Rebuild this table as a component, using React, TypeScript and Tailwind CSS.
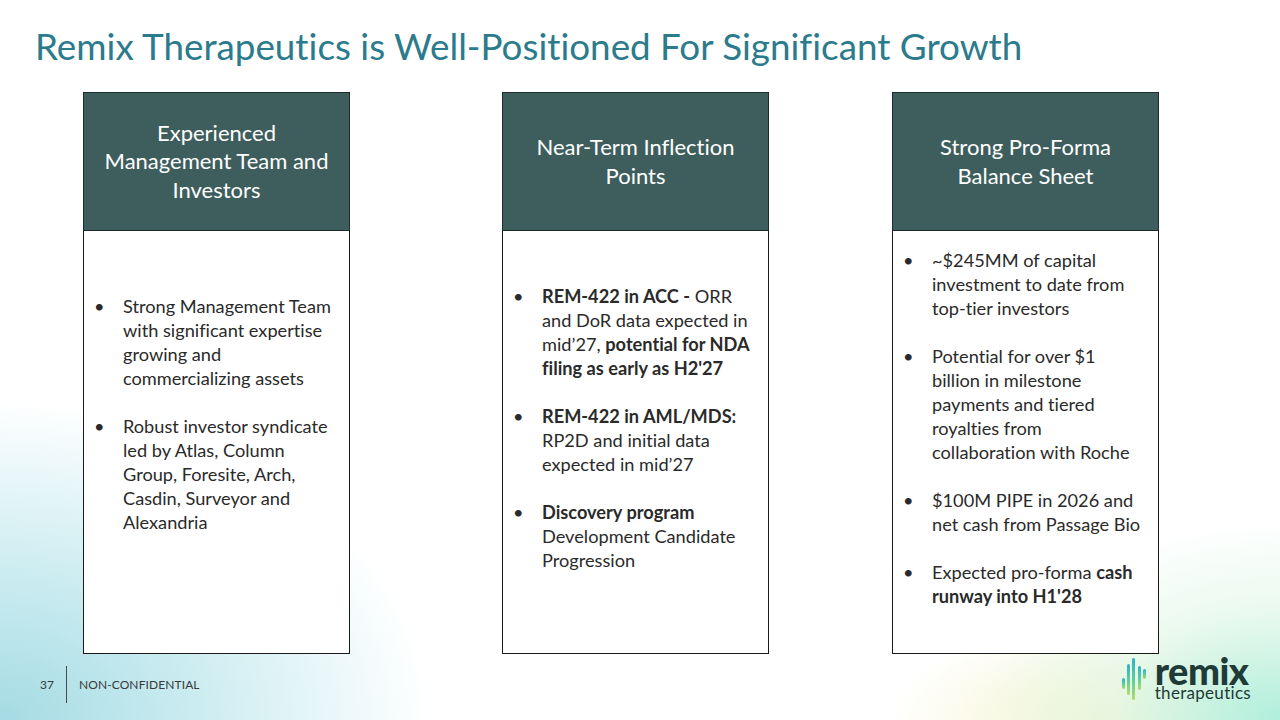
import React from "react";

const font = { fontFamily: "Lato, 'Liberation Sans', sans-serif" };

type Item = { lines: React.ReactNode[] };

function Bullet({ lines }: Item) {
  return (
    <div className="flex">
      <span className="w-[39px] shrink-0 pl-[10px]">•</span>
      <div>
        {lines.map((l, i) => (
          <div key={i} className="whitespace-nowrap">
            {l}
          </div>
        ))}
      </div>
    </div>
  );
}

function Card({
  title,
  items,
  padTop,
}: {
  title: React.ReactNode[];
  items: Item[];
  padTop: string;
}) {
  return (
    <div className="flex w-[267px] flex-col">
      <div className="flex h-[139px] flex-col items-center justify-center border border-[#1f2b2b] bg-[#3e5e5d] text-center text-[22px] leading-[28.5px] text-white">
        {title.map((t, i) => (
          <div key={i} className="whitespace-nowrap">
            {t}
          </div>
        ))}
      </div>
      <div
        className={`h-[423px] border border-t-0 border-[#1a1a1a] bg-white text-[18.2px] leading-[24px] text-[#2a2a2a] ${padTop}`}
      >
        <div className="flex flex-col gap-[24px]">
          {items.map((it, i) => (
            <Bullet key={i} lines={it.lines} />
          ))}
        </div>
      </div>
    </div>
  );
}

function Logo() {
  return (
    <div className="mt-[1px] flex items-start gap-[9px]">
      <svg width="26" height="46" viewBox="0 0 26 46" className="mt-[2px]">
        <defs>
          <linearGradient id="rx" x1="0" y1="0" x2="0" y2="1">
            <stop offset="0" stopColor="#2bb3c9" />
            <stop offset="0.55" stopColor="#5fcf9a" />
            <stop offset="1" stopColor="#b6dc6a" />
          </linearGradient>
        </defs>
        <rect x="2" y="21" width="3" height="11" rx="1.5" fill="url(#rx)" />
        <rect x="7" y="7" width="3" height="31" rx="1.5" fill="url(#rx)" />
        <rect x="12" y="1" width="3" height="42" rx="1.5" fill="url(#rx)" />
        <rect x="18" y="9" width="3" height="24" rx="1.5" fill="url(#rx)" />
        <rect x="23" y="12" width="3" height="10" rx="1.5" fill="url(#rx)" />
      </svg>
      <div className="flex flex-col text-[#1e3b37]">
        <span className="text-[38px] font-black leading-[30px] tracking-[-0.5px]">remix</span>
        <span className="text-[17px] leading-[16px] tracking-[0.3px]">therapeutics</span>
      </div>
    </div>
  );
}

export default function App() {
  return (
    <div
      style={font}
      className="flex h-[720px] w-[1280px] flex-col overflow-hidden bg-white [font-variant-ligatures:no-common-ligatures] bg-[radial-gradient(ellipse_430px_320px_at_0%_100%,#a5dbe3_0%,#c6eaef_40%,rgba(255,255,255,0)_100%),radial-gradient(ellipse_300px_200px_at_100%_100%,#b0eedc_0%,rgba(225,247,233,0.7)_55%,rgba(255,255,255,0)_100%),radial-gradient(ellipse_240px_100px_at_88%_100%,#f3f2c6_0%,rgba(255,255,255,0)_100%)]"
    >
      <h1 className="pl-[35px] pt-[22px] text-[36.8px] leading-[48px] text-[#2b7b8c]">
        Remix Therapeutics is Well-Positioned For Significant Growth
      </h1>

      <div className="mt-[22px] flex pl-[83px]">
        <Card
          title={["Experienced", "Management Team and", "Investors"]}
          padTop="pt-[63px]"
          items={[
            {
              lines: [
                "Strong Management Team",
                "with significant expertise",
                "growing and",
                "commercializing assets",
              ],
            },
            {
              lines: [
                "Robust investor syndicate",
                "led by Atlas, Column",
                "Group, Foresite, Arch,",
                "Casdin, Surveyor and",
                "Alexandria",
              ],
            },
          ]}
        />
        <div className="ml-[152px]">
          <Card
            title={["Near-Term Inflection", "Points"]}
            padTop="pt-[53px]"
            items={[
              {
                lines: [
                  <>
                    <b>REM-422 in ACC -</b> ORR
                  </>,
                  "and DoR data expected in",
                  <>
                    mid’27, <b>potential for NDA</b>
                  </>,
                  <b>filing as early as H2'27</b>,
                ],
              },
              {
                lines: [
                  <b>REM-422 in AML/MDS:</b>,
                  "RP2D and initial data",
                  "expected in mid’27",
                ],
              },
              {
                lines: [
                  <b>Discovery program</b>,
                  "Development Candidate",
                  "Progression",
                ],
              },
            ]}
          />
        </div>
        <div className="ml-[123px]">
          <Card
            title={["Strong Pro-Forma", "Balance Sheet"]}
            padTop="pt-[17px]"
            items={[
              {
                lines: [
                  "~$245MM of capital",
                  "investment to date from",
                  "top-tier investors",
                ],
              },
              {
                lines: [
                  "Potential for over $1",
                  "billion in milestone",
                  "payments and tiered",
                  "royalties from",
                  "collaboration with Roche",
                ],
              },
              {
                lines: ["$100M PIPE in 2026 and", "net cash from Passage Bio"],
              },
              {
                lines: [
                  <>
                    Expected pro-forma <b>cash</b>
                  </>,
                  <b>runway into H1'28</b>,
                ],
              },
            ]}
          />
        </div>
      </div>

      <div className="flex flex-1 items-start justify-between pr-[29px]">
        <div className="mt-[12px] flex items-center pl-[40px] text-[12px] text-[#3a3a3a]">
          <span>37</span>
          <span className="mx-[12px] h-[37px] w-px bg-[#4a4a4a]" />
          <span className="tracking-[0.1px]">NON-CONFIDENTIAL</span>
        </div>
        <Logo />
      </div>
    </div>
  );
}
